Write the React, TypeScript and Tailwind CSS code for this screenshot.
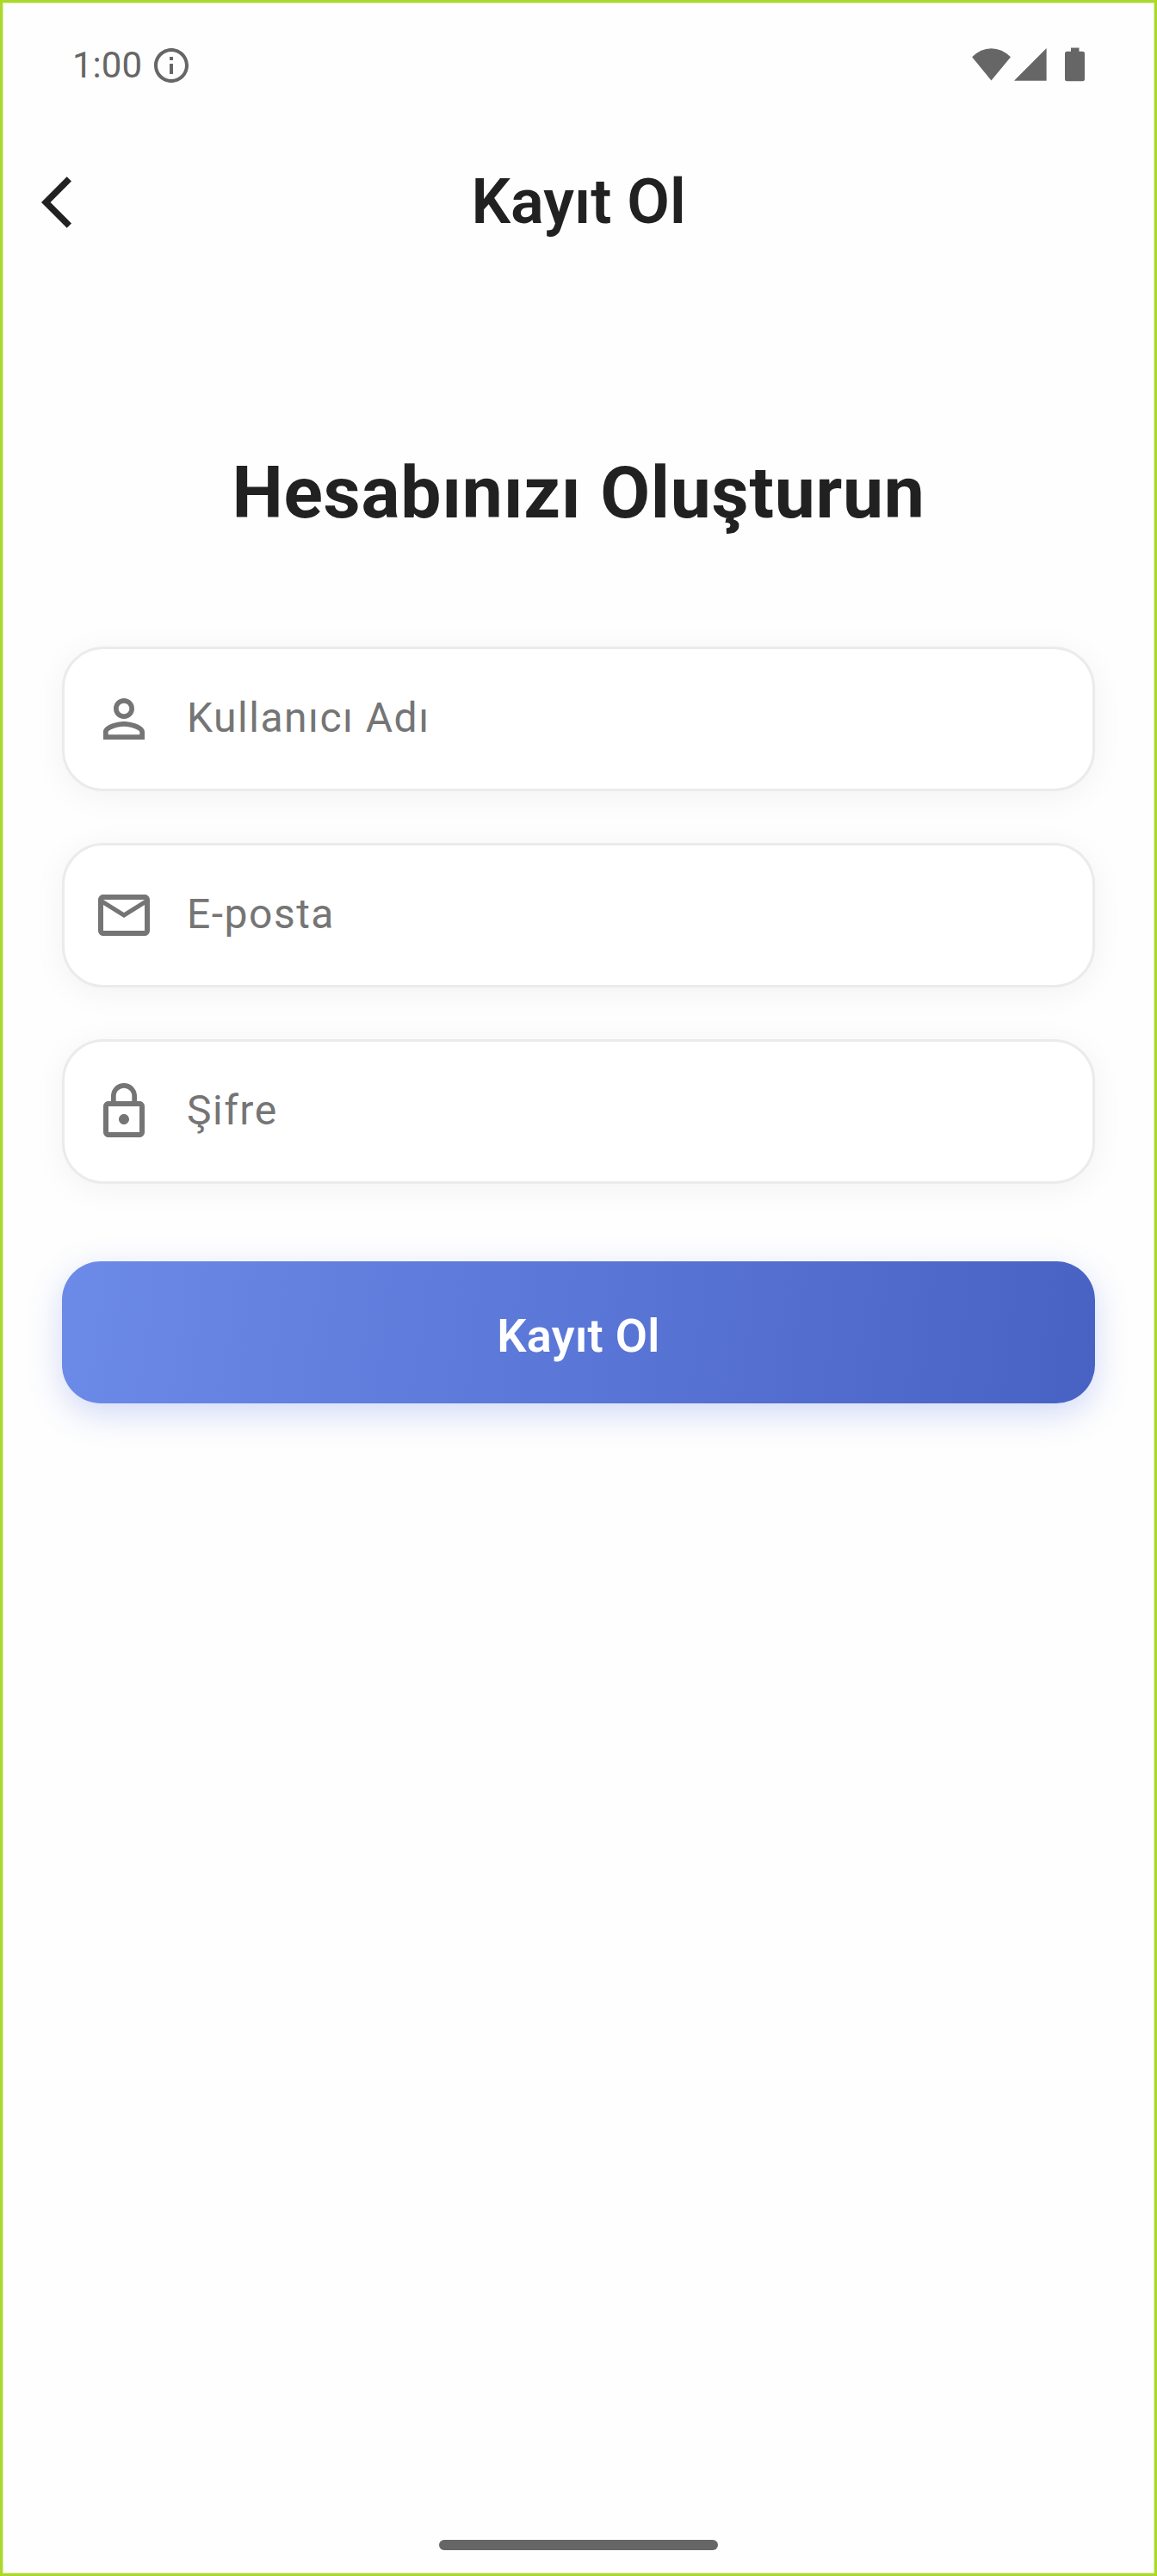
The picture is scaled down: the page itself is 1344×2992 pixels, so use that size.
import React from "react";

const PersonIcon = () => (
  <svg viewBox="0 0 24 24" className="size-[72px] shrink-0" fill="currentColor">
    <path d="M12 5.9c1.16 0 2.1.94 2.1 2.1s-.94 2.1-2.1 2.1S9.9 9.16 9.9 8s.94-2.1 2.1-2.1m0 9c2.97 0 6.1 1.46 6.1 2.1v1.1H5.9V17c0-.64 3.13-2.1 6.1-2.1M12 4C9.79 4 8 5.79 8 8s1.79 4 4 4 4-1.79 4-4-1.79-4-4-4zm0 9c-2.67 0-8 1.34-8 4v3h16v-3c0-2.66-5.33-4-8-4z" />
  </svg>
);

const MailIcon = () => (
  <svg viewBox="0 0 24 24" className="size-[72px] shrink-0" fill="currentColor">
    <path d="M22 6c0-1.1-.9-2-2-2H4c-1.1 0-2 .9-2 2v12c0 1.1.9 2 2 2h16c1.1 0 2-.9 2-2V6zm-2 0-8 5-8-5h16zm0 12H4V8l8 5 8-5v10z" />
  </svg>
);

const LockIcon = () => (
  <svg viewBox="0 0 24 24" className="size-[72px] shrink-0" fill="currentColor">
    <path d="M18 8h-1V6c0-2.76-2.24-5-5-5S7 3.24 7 6v2H6c-1.1 0-2 .9-2 2v10c0 1.1.9 2 2 2h12c1.1 0 2-.9 2-2V10c0-1.1-.9-2-2-2zM8.9 6c0-1.71 1.39-3.1 3.1-3.1s3.1 1.39 3.1 3.1v2H8.9V6zM18 20H6V10h12v10zm-6-3c1.1 0 2-.9 2-2s-.9-2-2-2-2 .9-2 2 .9 2 2 2z" />
  </svg>
);

function Field({ icon, label }: { icon: React.ReactNode; label: string }) {
  return (
    <div className="flex h-[168px] items-center gap-[37px] rounded-[48px] border-[3px] border-[#ebebeb] bg-white pl-[33px] text-[#757575] shadow-[0_6px_38px_rgba(0,0,0,0.05)]">
      {icon}
      <span className="pb-[3px] text-[48px] leading-[57px] tracking-[1.5px]">{label}</span>
    </div>
  );
}

export default function App() {
  return (
    <div className="flex h-[2992px] w-[1344px] flex-col border-[3px] border-[#aad92b] bg-[#fefefe] font-['Roboto',sans-serif] text-[#212121]">
      <div className="flex flex-1 flex-col border border-[#dff0b0]">
        <header className="flex h-[143px] items-center justify-between px-[80px] text-[#666666]">
          <div className="flex items-center gap-[10px]">
            <span className="text-[42px] leading-[48px]">1:00</span>
            <svg viewBox="0 0 24 24" className="size-12" fill="currentColor">
              <path d="M11 7h2v2h-2zm0 4h2v6h-2zm1-9C6.48 2 2 6.48 2 12s4.48 10 10 10 10-4.48 10-10S17.52 2 12 2zm0 18c-4.41 0-8-3.59-8-8s3.59-8 8-8 8 3.59 8 8-3.59 8-8 8z" />
            </svg>
          </div>
          <svg viewBox="1128 51.5 132 48" className="h-12 w-[132px]" fill="currentColor">
            <path d="M1129.2 65.7Q1139 55.7 1151.5 55.7T1174 65.7L1151.5 93Z" />
            <path d="M1215.6 55.6V93.3H1178Z" />
            <path d="M1244 55h9.5v4.2h4q2.5 0 2.5 2.5v29.5q0 2.5-2.5 2.5h-18q-2.5 0-2.5-2.5v-29.5q0-2.5 2.5-2.5h4.5z" />
          </svg>
        </header>

        <nav className="grid h-[176px] grid-cols-[72px_1fr_72px] items-center px-[44px]">
          <svg viewBox="0 0 24 24" className="size-[72px]" fill="currentColor">
            <path d="M11.67 3.87 9.9 2.1 0 12l9.9 9.9 1.77-1.77L3.54 12z" />
          </svg>
          <h1 className="text-center text-[72px] leading-[84px] font-semibold">Kayıt Ol</h1>
        </nav>

        <main className="flex flex-1 flex-col px-[68px] pt-[200px]">
          <h2 className="text-center text-[84px] leading-[99px] font-bold tracking-[0.75px]">Hesabınızı Oluşturun</h2>
          <form className="mt-[129px] flex flex-col">
            <div className="flex flex-col gap-[60px]">
              <Field icon={<PersonIcon />} label="Kullanıcı Adı" />
              <Field icon={<MailIcon />} label="E-posta" />
              <Field icon={<LockIcon />} label="Şifre" />
            </div>
            <button
              type="button"
              className="mt-[90px] h-[165px] rounded-[45px] bg-[linear-gradient(97.8deg,#6c8ae8,#4862c4)] pt-2 text-[54px] leading-[63px] font-semibold tracking-[0.3px] text-white shadow-[0_12px_38px_rgba(74,106,228,0.25)]"
            >
              Kayıt Ol
            </button>
          </form>
        </main>

        <footer className="flex justify-center pb-[26px]">
          <div className="h-3 w-[324px] rounded-full bg-[#666666]" />
        </footer>
      </div>
    </div>
  );
}
